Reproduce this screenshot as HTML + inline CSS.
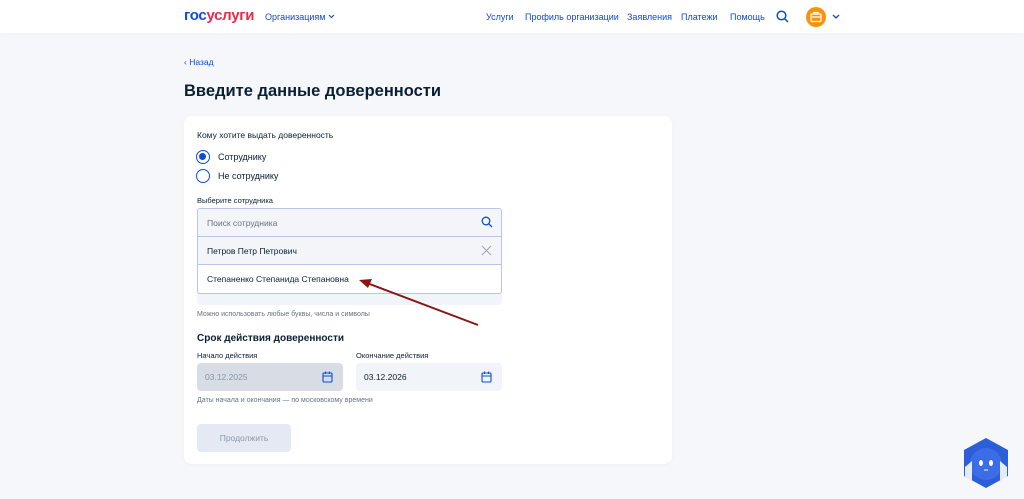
<!DOCTYPE html>
<html><head><meta charset="utf-8"><style>
*{box-sizing:border-box;margin:0;padding:0}
body{width:1024px;height:499px;overflow:hidden;background:#f5f7fb;font-family:"Liberation Sans","Noto Sans CJK SC",sans-serif;color:#0b1f33;position:relative}
.hdr{position:absolute;left:0;top:0;width:1024px;height:33px;background:#fff;box-shadow:0 1px 3px rgba(0,0,0,.04)}
.a{position:absolute;white-space:nowrap}
.nav{font-size:9px;color:#0d4cd3;top:12px}
.card{position:absolute;left:184px;top:116px;width:488px;height:348px;background:#fff;border-radius:8px;box-shadow:0 1px 4px rgba(0,0,0,.04)}
</style></head><body>
<div class="hdr">
<div class="a" style="left:184px;top:7px;font-size:15px;font-weight:bold;letter-spacing:-.3px"><span style="color:#0d4cd3">гос</span><span style="color:#e12d4a">услуги</span></div>
<div class="a nav" style="left:265px">Организациям</div>
<svg class="a" style="left:328px;top:14px" width="7" height="5" viewBox="0 0 7 5"><path d="M1 1l2.5 2.5L6 1" stroke="#0d4cd3" stroke-width="1.1" fill="none"/></svg>
<div class="a nav" style="left:486px">Услуги</div>
<div class="a nav" style="left:525px">Профиль организации</div>
<div class="a nav" style="left:627px">Заявления</div>
<div class="a nav" style="left:681px">Платежи</div>
<div class="a nav" style="left:730px">Помощь</div>
<svg class="a" style="left:776px;top:10px" width="13" height="13" viewBox="0 0 13 13"><circle cx="5.5" cy="5.5" r="4.3" fill="none" stroke="#0d4cd3" stroke-width="1.5"/><path d="M8.6 8.6L12 12" stroke="#0d4cd3" stroke-width="1.5"/></svg>
<svg class="a" style="left:806px;top:7px" width="20" height="20" viewBox="0 0 20 20"><circle cx="10" cy="10" r="10" fill="#f7930e"/><rect x="5" y="7" width="10" height="7.5" rx="1" fill="none" stroke="#fff" stroke-width="1.2"/><path d="M8 7V5.5h4V7M5 10h10" stroke="#fff" stroke-width="1.2" fill="none"/></svg>
<svg class="a" style="left:832px;top:14px" width="8" height="6" viewBox="0 0 8 6"><path d="M1 1l3 3 3-3" stroke="#0d4cd3" stroke-width="1.3" fill="none"/></svg>
</div>
<div class="a" style="left:184px;top:57px;font-size:8.5px;color:#0d4cd3">‹ Назад</div>
<div class="a" style="left:184px;top:82px;font-size:16.5px;font-weight:bold;color:#0b1f33">Введите данные доверенности</div>
<div class="card"></div>
<div class="a" style="left:197px;top:130px;font-size:8.5px">Кому хотите выдать доверенность</div>
<div class="a" style="left:196px;top:150px;width:14px;height:14px;border:1.5px solid #0d4cd3;border-radius:50%"><div style="margin:2px;width:7px;height:7px;border-radius:50%;background:#0d4cd3"></div></div>
<div class="a" style="left:218px;top:152px;font-size:9px">Сотруднику</div>
<div class="a" style="left:196px;top:169px;width:14px;height:14px;border:1.5px solid #0d4cd3;border-radius:50%"></div>
<div class="a" style="left:218px;top:171px;font-size:9px">Не сотруднику</div>
<div class="a" style="left:197px;top:196px;font-size:7.5px">Выберите сотрудника</div>
<div class="a" style="left:197px;top:208px;width:305px;height:97px;background:#f1f4f8;border-radius:4px"></div>
<div class="a" style="left:197px;top:208px;width:305px;height:86px;border:1px solid #b6c5e8;border-radius:3px;background:#fff;overflow:hidden">
<div style="height:28px;background:#f3f5f9;border-bottom:1px solid #b6c5e8;padding:9px 9px;font-size:8.5px;color:#66727f">Поиск сотрудника</div>
<div style="height:28px;background:#f3f5f9;border-bottom:1px solid #b6c5e8;padding:9px 9px;font-size:8.5px">Петров Петр Петрович</div>
<div style="height:28px;padding:9px 9px;font-size:8.5px">Степаненко Степанида Степановна</div>
</div>
<svg class="a" style="left:481px;top:216px" width="12" height="12" viewBox="0 0 12 12"><circle cx="5" cy="5" r="3.8" fill="none" stroke="#0d4cd3" stroke-width="1.3"/><path d="M7.8 7.8L11 11" stroke="#0d4cd3" stroke-width="1.3"/></svg>
<svg class="a" style="left:481px;top:245px" width="11" height="11" viewBox="0 0 11 11"><path d="M1 1l9 9M10 1l-9 9" stroke="#9aa5b4" stroke-width="1"/></svg>
<div class="a" style="left:197px;top:311px;font-size:7px;color:#66727f">Можно использовать любые буквы, числа и символы</div>
<div class="a" style="left:197px;top:333px;font-size:10px;font-weight:bold">Срок действия доверенности</div>
<div class="a" style="left:197px;top:351px;font-size:7.5px">Начало действия</div>
<div class="a" style="left:356px;top:351px;font-size:7.5px">Окончание действия</div>
<div class="a" style="left:197px;top:363px;width:146px;height:28px;background:#d8dce4;border-radius:4px;padding:9px 8px;font-size:8.5px;color:#8a96a5">03.12.2025</div>
<div class="a" style="left:356px;top:363px;width:146px;height:28px;background:#f1f4f8;border-radius:4px;padding:9px 8px;font-size:8.5px">03.12.2026</div>
<svg class="a" style="left:322px;top:371px" width="11" height="12" viewBox="0 0 11 12"><rect x="1" y="2" width="9" height="9" rx="1" fill="none" stroke="#0d4cd3" stroke-width="1.1"/><path d="M1 5h9M3.5 0.5v2.5M7.5 0.5v2.5" stroke="#0d4cd3" stroke-width="1.1"/></svg>
<svg class="a" style="left:481px;top:371px" width="11" height="12" viewBox="0 0 11 12"><rect x="1" y="2" width="9" height="9" rx="1" fill="none" stroke="#0d4cd3" stroke-width="1.1"/><path d="M1 5h9M3.5 0.5v2.5M7.5 0.5v2.5" stroke="#0d4cd3" stroke-width="1.1"/></svg>
<div class="a" style="left:197px;top:397px;font-size:7px;color:#66727f">Даты начала и окончания — по московскому времени</div>
<div class="a" style="left:197px;top:424px;width:94px;height:28px;background:#e4e9f3;border-radius:4px;text-align:center;padding-top:9px;font-size:8.5px;color:#8d9aaa">Продолжить</div>
<svg class="a" style="left:0;top:0" width="1024" height="499"><path d="M478 325L367 283" stroke="#8b1414" stroke-width="2"/><path d="M359 280L372 279L368 288Z" fill="#8b1414"/></svg>
<svg class="a" style="left:962px;top:437px" width="48" height="52" viewBox="0 0 48 52"><path d="M24 1L46 13V39L24 51L2 39V13Z" fill="#2d5ed9"/><circle cx="24" cy="27" r="16" fill="#3b6ee6"/><path d="M3 30l7-6v20l-7-4zM45 30l-7-6v20l7-4z" fill="#e5ebf5"/><ellipse cx="19" cy="26" rx="2" ry="3" fill="#fff"/><ellipse cx="29" cy="26" rx="2" ry="3" fill="#fff"/><path d="M22 33h4" stroke="#fff"/></svg>
</body></html>
